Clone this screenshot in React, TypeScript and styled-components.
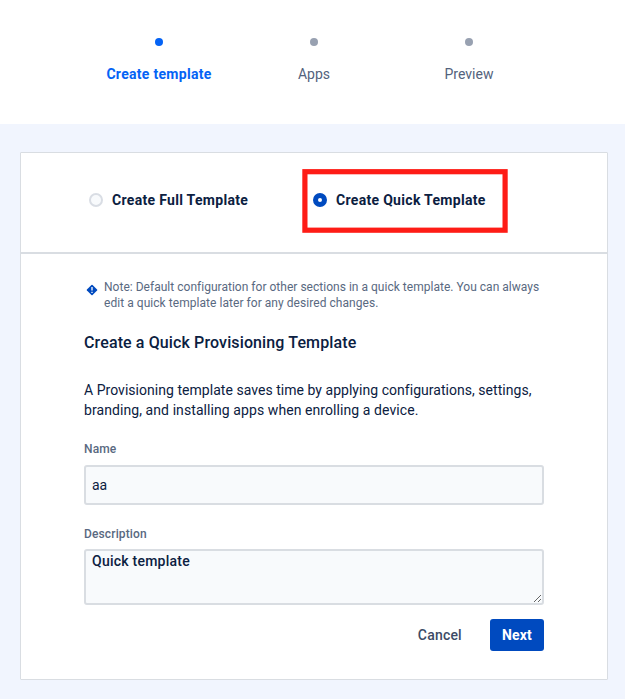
import React, { useState } from "react";
import styled, { createGlobalStyle } from "styled-components";

const GlobalStyle = createGlobalStyle`
  *, *::before, *::after { box-sizing: border-box; }
  body {
    margin: 0;
    background: #f1f5fe;
    color: #0b2041;
    font-family: Roboto, "Liberation Sans", sans-serif;
    font-size: 14px;
    line-height: 20px;
  }
`;

const Page = styled.div`
  display: flex;
  flex-direction: column;
  height: 699px;
  overflow: hidden;
`;

const Stepper = styled.nav`
  display: grid;
  grid-template-columns: repeat(3, 155px);
  align-content: start;
  height: 124px;
  padding: 38px 0 0 81.5px;
  background: #fff;
`;

const Step = styled.div<{ $active?: boolean }>`
  display: flex;
  flex-direction: column;
  align-items: center;
  gap: 18px;
  color: ${(p) => (p.$active ? "#0463f5" : "#53627c")};
  font-weight: ${(p) => (p.$active ? 700 : 400)};
  letter-spacing: ${(p) => (p.$active ? "0.29px" : "0.03px")};

  &::before {
    content: "";
    width: 8px;
    height: 8px;
    border-radius: 50%;
    background: ${(p) => (p.$active ? "#0463f5" : "#98a1b1")};
  }
`;

const Card = styled.main`
  width: 588px;
  height: 528px;
  margin: 28px 0 0 20px;
  border: 1px solid #d9dde2;
  border-radius: 1px;
  background: #fff;
`;

const TemplateChoice = styled.div`
  display: grid;
  grid-template-columns: 224px 1fr;
  align-items: center;
  height: 101px;
  padding: 0 68px 5px;
  border-bottom: 2px solid #d9dde2;
`;

const Option = styled.label<{ $spacing: number }>`
  position: relative;
  display: flex;
  align-items: center;
  gap: 9px;
  justify-self: start;
  font-weight: 700;
  letter-spacing: ${(p) => p.$spacing}px;
`;

const Radio = styled.input`
  appearance: none;
  width: 14px;
  height: 14px;
  margin: 0;
  border: 2px solid #d9dde4;
  border-radius: 50%;
  background: #f8fafc;

  &:checked {
    border: 5px solid #004abf;
    background: #fff;
  }
`;

const Highlight = styled.svg`
  position: absolute;
  left: -11px;
  top: -22px;
  width: 206px;
  height: 65px;
  pointer-events: none;
`;

const Form = styled.form`
  display: flex;
  flex-direction: column;
  padding: 25px 63px 0;
`;

const Note = styled.div`
  display: flex;
  gap: 6px;
  padding-left: 2px;
  color: #596981;
  font-size: 12px;
  line-height: 16px;
`;

const NoteIcon = styled.svg`
  flex: none;
  width: 12px;
  height: 12px;
  margin-top: 5px;
`;

const Line = styled.span<{ $spacing: number }>`
  display: block;
  white-space: nowrap;
  letter-spacing: ${(p) => p.$spacing}px;
`;

const Heading = styled.h1`
  margin: 21px 0 0;
  font-size: 16px;
  font-weight: 500;
  line-height: 22px;
  letter-spacing: 0.12px;
`;

const Intro = styled.p`
  margin: 26px 0 0;
`;

const FieldLabel = styled.label`
  margin-top: 21px;
  color: #596981;
  font-size: 12px;
  font-weight: 500;
  line-height: 16px;
  letter-spacing: 0.14px;
`;

const TextInput = styled.input`
  height: 40px;
  margin-top: 8px;
  padding: 0 6px;
  border: 2px solid #d9dde2;
  border-radius: 3px;
  outline: none;
  background: #f8fafc;
  color: #0b2041;
  font: inherit;
`;

const TextBox = styled.textarea`
  display: block;
  height: 56px;
  margin-top: 7px;
  padding: 0 6px;
  border: 2px solid #d9dde2;
  border-radius: 3px;
  outline: none;
  background: #f8fafc;
  color: #0b2041;
  font: inherit;
  font-weight: 500;
  letter-spacing: 0.24px;
  resize: vertical;
`;

const Actions = styled.div`
  display: flex;
  justify-content: flex-end;
  gap: 16px;
  margin-top: 14px;
`;

const Button = styled.button<{ $primary?: boolean }>`
  height: 32px;
  padding: 0 12px;
  border: 0;
  border-radius: 3px;
  background: ${(p) => (p.$primary ? "#004abf" : "transparent")};
  color: ${(p) => (p.$primary ? "#fff" : "#3c4b66")};
  font: inherit;
  font-weight: ${(p) => (p.$primary ? 700 : 500)};
  letter-spacing: 0.2px;
`;

export default function App() {
  const [kind, setKind] = useState("quick");
  return (
    <>
      <GlobalStyle />
      <Page>
        <Stepper>
          <Step $active>Create template</Step>
          <Step>Apps</Step>
          <Step>Preview</Step>
        </Stepper>
        <Card>
          <TemplateChoice>
            <Option $spacing={0.31}>
              <Radio type="radio" name="kind" checked={kind === "full"} onChange={() => setKind("full")} />
              Create Full Template
            </Option>
            <Option $spacing={0.31}>
              <Radio type="radio" name="kind" checked={kind === "quick"} onChange={() => setKind("quick")} />
              Create Quick Template
              <Highlight viewBox="0 0 206 65">
                <rect x="2.9" y="3.7" width="200.2" height="58.5" fill="none" stroke="#fe1c16" strokeWidth="5.2" />
              </Highlight>
            </Option>
          </TemplateChoice>
          <Form onSubmit={(e) => e.preventDefault()}>
            <Note>
              <NoteIcon viewBox="0 0 12 12">
                <rect x="2" y="2" width="8" height="8" rx="0.8" transform="rotate(45 6 6)" fill="#004abf" />
                <path d="M6 3v3.6M6 7.7v1.3" stroke="#fff" strokeWidth="1.3" />
              </NoteIcon>
              <div>
                <Line $spacing={0.02}>
                  Note: Default configuration for other sections in a quick template. You can always
                </Line>
                <Line $spacing={0.048}>edit a quick template later for any desired changes.</Line>
              </div>
            </Note>
            <Heading>Create a Quick Provisioning Template</Heading>
            <Intro>
              <Line $spacing={0.035}>
                A Provisioning template saves time by applying configurations, settings,
              </Line>
              <Line $spacing={0.08}>branding, and installing apps when enrolling a device.</Line>
            </Intro>
            <FieldLabel htmlFor="name">Name</FieldLabel>
            <TextInput id="name" defaultValue="aa" />
            <FieldLabel htmlFor="description">Description</FieldLabel>
            <TextBox id="description" defaultValue="Quick template" />
            <Actions>
              <Button type="button">Cancel</Button>
              <Button type="submit" $primary>Next</Button>
            </Actions>
          </Form>
        </Card>
      </Page>
    </>
  );
}
